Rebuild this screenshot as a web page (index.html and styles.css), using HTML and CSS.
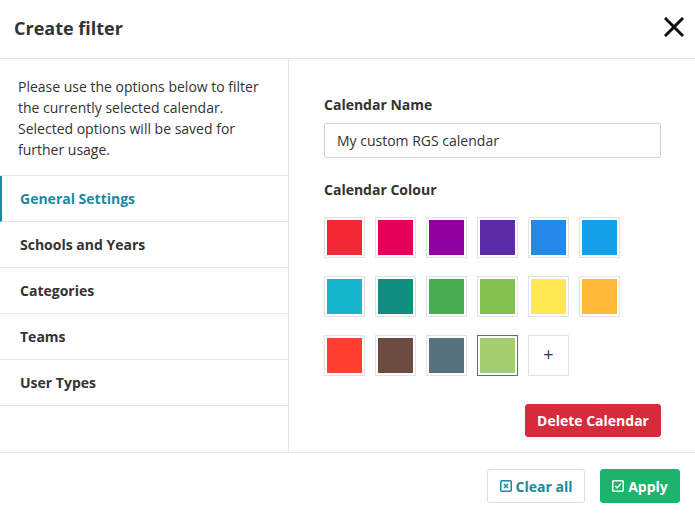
FILE: index.html
```html
<!DOCTYPE html>
<html>
<head>
<meta charset="utf-8">
<link rel="stylesheet" href="styles.css">
</head>
<body>
<div class="modal">
  <div class="header">
    <h1 class="title">Create filter</h1>
    <button class="close" aria-label="Close">
      <svg width="20" height="20" viewBox="0 0 20 20"><path d="M2 2 L18 18 M18 2 L2 18" stroke="#111" stroke-width="3" stroke-linecap="square" fill="none"/></svg>
    </button>
  </div>
  <div class="body">
    <div class="sidebar">
      <p class="desc">Please use the options below to filter the currently selected calendar. Selected options will be saved for further usage.</p>
      <ul class="menu">
        <li class="item active">General Settings</li>
        <li class="item">Schools and Years</li>
        <li class="item">Categories</li>
        <li class="item">Teams</li>
        <li class="item">User Types</li>
      </ul>
    </div>
    <div class="panel">
      <label class="label">Calendar Name</label>
      <div class="input">My custom RGS calendar</div>
      <label class="label label-colour">Calendar Colour</label>
      <div class="swatches">
        <div class="swatch"><span class="fill c1"></span></div>
        <div class="swatch"><span class="fill c2"></span></div>
        <div class="swatch"><span class="fill c3"></span></div>
        <div class="swatch"><span class="fill c4"></span></div>
        <div class="swatch"><span class="fill c5"></span></div>
        <div class="swatch"><span class="fill c6"></span></div>
        <div class="swatch"><span class="fill c7"></span></div>
        <div class="swatch"><span class="fill c8"></span></div>
        <div class="swatch"><span class="fill c9"></span></div>
        <div class="swatch"><span class="fill c10"></span></div>
        <div class="swatch"><span class="fill c11"></span></div>
        <div class="swatch"><span class="fill c12"></span></div>
        <div class="swatch"><span class="fill c13"></span></div>
        <div class="swatch"><span class="fill c14"></span></div>
        <div class="swatch"><span class="fill c15"></span></div>
        <div class="swatch selected"><span class="fill c16"></span></div>
        <div class="swatch add">+</div>
      </div>
      <div class="actions">
        <button class="btn btn-danger">Delete Calendar</button>
      </div>
    </div>
  </div>
  <div class="footer">
    <button class="btn btn-outline">
      <svg class="ico" width="12" height="12" viewBox="0 0 12 12"><rect x="0.75" y="0.75" width="10.5" height="10.5" rx="1" fill="none" stroke="currentColor" stroke-width="1.5"/><path d="M4 4 L8 8 M8 4 L4 8" stroke="currentColor" stroke-width="1.5" fill="none"/></svg>
      Clear all
    </button>
    <button class="btn btn-success">
      <svg class="ico" width="12" height="12" viewBox="0 0 12 12"><rect x="0.75" y="0.75" width="10.5" height="10.5" rx="1" fill="none" stroke="currentColor" stroke-width="1.5"/><path d="M3.2 6 L5.2 8 L8.8 3.8" stroke="currentColor" stroke-width="1.5" fill="none"/></svg>
      Apply
    </button>
  </div>
</div>
</body>
</html>
```
FILE: styles.css
```css
* { box-sizing: border-box; }
html, body { margin: 0; padding: 0; background: #fff; }
body {
  font-family: "Open Sans", "Liberation Sans", sans-serif;
  font-size: 14px;
  line-height: 21px;
  color: #333;
}
.modal {
  width: 695px;
  height: 519px;
  display: flex;
  flex-direction: column;
}
.header {
  height: 59px;
  border-bottom: 1px solid #e5e5e5;
  display: flex;
  align-items: center;
  justify-content: space-between;
  padding: 0 11px 0 14px;
  flex-shrink: 0;
}
.title {
  margin: 0;
  font-size: 18px;
  font-weight: 700;
  color: #333;
  line-height: 24px;
  padding-bottom: 2px;
}
.close {
  border: 0;
  background: none;
  padding: 0;
  width: 20px;
  height: 20px;
  display: flex;
  margin-bottom: 4px;
}
.body {
  flex: 1;
  display: flex;
  min-height: 0;
}
.sidebar {
  width: 289px;
  border-right: 1px solid #e5e5e5;
  flex-shrink: 0;
}
.desc {
  margin: 0;
  padding: 17px 18px 15px 18px;
  border-bottom: 1px solid #e5e5e5;
  color: #333;
}
.menu {
  list-style: none;
  margin: 0;
  padding: 0;
}
.item {
  height: 46px;
  border-bottom: 1px solid #e5e5e5;
  display: flex;
  align-items: center;
  padding-left: 20px;
  font-weight: 700;
  color: #333;
}
.item.active {
  color: #1b8a9f;
  border-left: 2px solid #1b8a9f;
  padding-left: 18px;
}
.panel {
  flex: 1;
  padding: 35px 34px 15px 35px;
  display: flex;
  flex-direction: column;
}
.label {
  font-weight: 700;
  color: #333;
  display: block;
}
.input {
  margin-top: 8px;
  height: 35px;
  border: 1px solid #d4d4d4;
  border-radius: 2px;
  padding: 0 12px;
  display: flex;
  align-items: center;
  color: #333;
}
.label-colour { margin-top: 21px; }
.swatches {
  margin-top: 17px;
  display: grid;
  grid-template-columns: repeat(6, 41px);
  column-gap: 10px;
  row-gap: 18px;
}
.swatch {
  width: 41px;
  height: 41px;
  border: 1px solid #e2e2e2;
  padding: 2px;
  background: #fff;
}
.swatch.selected { border-color: #1b8a9f; }
.fill { display: block; width: 100%; height: 100%; }
.swatch.add {
  display: flex;
  align-items: center;
  justify-content: center;
  font-size: 18px;
  color: #333;
  padding: 0 0 2px 0;
}
.c1 { background: #f32837; }
.c2 { background: #e6005a; }
.c3 { background: #91009f; }
.c4 { background: #5c2ca8; }
.c5 { background: #238ae8; }
.c6 { background: #14a1e9; }
.c7 { background: #15b6cc; }
.c8 { background: #108e7e; }
.c9 { background: #47ab4f; }
.c10 { background: #83c14e; }
.c11 { background: #ffe850; }
.c12 { background: #ffb837; }
.c13 { background: #ff4031; }
.c14 { background: #6c4b42; }
.c15 { background: #55727d; }
.c16 { background: #a2ce70; }
.actions {
  margin-top: auto;
  display: flex;
  justify-content: flex-end;
}
.btn {
  font-family: "Open Sans", "Liberation Sans", sans-serif;
  font-size: 14px;
  font-weight: 700;
  border-radius: 3px;
  display: inline-flex;
  align-items: center;
  justify-content: center;
  gap: 4px;
  cursor: pointer;
}
.btn-danger {
  height: 33px;
  width: 136px;
  background: #d72b3b;
  border: 1px solid #d72b3b;
  color: #fff;
}
.footer {
  height: 67px;
  border-top: 1px solid #e0e4e8;
  display: flex;
  align-items: center;
  justify-content: flex-end;
  gap: 15px;
  padding: 0 15px 0 0;
  flex-shrink: 0;
}
.btn-outline {
  height: 34px;
  width: 98px;
  background: #fff;
  border: 1px solid #dedede;
  color: #1b8a9f;
}
.btn-success {
  height: 34px;
  width: 80px;
  background: #1bb46b;
  border: 1px solid #1bb46b;
  color: #fff;
}
.ico { flex-shrink: 0; }
```
